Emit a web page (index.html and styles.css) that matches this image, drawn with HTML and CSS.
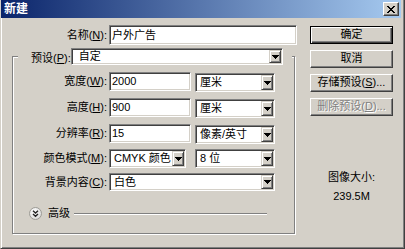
FILE: index.html
```html
<!DOCTYPE html>
<html lang="zh-CN">
<head>
<meta charset="utf-8">
<title>新建</title>
<link rel="stylesheet" href="styles.css">
</head>
<body>
<div class="window">
  <div class="titlebar">
    <span class="title">新建</span>
    <span class="close">
      <svg width="8" height="7" viewBox="0 0 8 7" shape-rendering="crispEdges"><path d="M0 0h2v1h-2zM6 0h2v1h-2zM1 1h2v1h-2zM5 1h2v1h-2zM2 2h4v1h-4zM3 3h2v1h-2zM2 4h4v1h-4zM1 5h2v1h-2zM5 5h2v1h-2zM0 6h2v1h-2zM6 6h2v1h-2z" fill="#000"/></svg>
    </span>
  </div>
  <div class="content">
    <div class="left">
      <div class="name-row">
        <span class="lbl name-lbl">名称(<u>N</u>):</span>
        <div class="field name">户外广告</div>
      </div>
      <fieldset class="group">
        <legend>
          <div class="legend-inner">
            <span class="legend-lbl">预设(<u>P</u>):</span>
            <div class="select preset"><span class="val">自定</span><span class="arrow"><svg width="7" height="4" viewBox="0 0 7 4" shape-rendering="crispEdges"><path d="M0 0h7v1h-1v1h-1v1h-1v1h-1v-1h-1v-1h-1v-1h-1z" fill="#000"/></svg></span></div>
          </div>
        </legend>
        <div class="row">
          <span class="lbl">宽度(<u>W</u>):</span>
          <div class="field num">2000</div>
          <div class="select unit"><span class="val">厘米</span><span class="arrow"><svg width="7" height="4" viewBox="0 0 7 4" shape-rendering="crispEdges"><path d="M0 0h7v1h-1v1h-1v1h-1v1h-1v-1h-1v-1h-1v-1h-1z" fill="#000"/></svg></span></div>
        </div>
        <div class="row">
          <span class="lbl">高度(<u>H</u>):</span>
          <div class="field num">900</div>
          <div class="select unit"><span class="val">厘米</span><span class="arrow"><svg width="7" height="4" viewBox="0 0 7 4" shape-rendering="crispEdges"><path d="M0 0h7v1h-1v1h-1v1h-1v1h-1v-1h-1v-1h-1v-1h-1z" fill="#000"/></svg></span></div>
        </div>
        <div class="row">
          <span class="lbl">分辨率(<u>R</u>):</span>
          <div class="field num">15</div>
          <div class="select unit"><span class="val">像素/英寸</span><span class="arrow"><svg width="7" height="4" viewBox="0 0 7 4" shape-rendering="crispEdges"><path d="M0 0h7v1h-1v1h-1v1h-1v1h-1v-1h-1v-1h-1v-1h-1z" fill="#000"/></svg></span></div>
        </div>
        <div class="row row-mode">
          <span class="lbl">颜色模式(<u>M</u>):</span>
          <div class="select mode"><span class="val">CMYK 颜色</span><span class="arrow"><svg width="7" height="4" viewBox="0 0 7 4" shape-rendering="crispEdges"><path d="M0 0h7v1h-1v1h-1v1h-1v1h-1v-1h-1v-1h-1v-1h-1z" fill="#000"/></svg></span></div>
          <div class="select bits"><span class="val">8 位</span><span class="arrow"><svg width="7" height="4" viewBox="0 0 7 4" shape-rendering="crispEdges"><path d="M0 0h7v1h-1v1h-1v1h-1v1h-1v-1h-1v-1h-1v-1h-1z" fill="#000"/></svg></span></div>
        </div>
        <div class="row row-bg">
          <span class="lbl">背景内容(<u>C</u>):</span>
          <div class="select bg"><span class="val">白色</span><span class="arrow"><svg width="7" height="4" viewBox="0 0 7 4" shape-rendering="crispEdges"><path d="M0 0h7v1h-1v1h-1v1h-1v1h-1v-1h-1v-1h-1v-1h-1z" fill="#000"/></svg></span></div>
        </div>
        <div class="adv">
          <svg class="adv-icon" width="13" height="13" viewBox="0 0 13 13">
            <defs><radialGradient id="g" cx="0.4" cy="0.35" r="0.7"><stop offset="0" stop-color="#ffffff"/><stop offset="1" stop-color="#d8d8d8"/></radialGradient></defs>
            <circle cx="6.5" cy="6.5" r="6" fill="url(#g)" stroke="#9c9a94"/>
            <path d="M4 3.8 L6.5 6 L9 3.8 M4 7 L6.5 9.2 L9 7" fill="none" stroke="#222" stroke-width="1.4"/>
          </svg>
          <span class="adv-lbl">高级</span>
          <span class="adv-line"></span>
        </div>
      </fieldset>
    </div>
    <div class="right">
      <div class="btn default">确定</div>
      <div class="btn">取消</div>
      <div class="btn">存储预设(<u>S</u>)...</div>
      <div class="btn disabled">删除预设(<u>D</u>)...</div>
      <div class="info">
        <div class="info-title">图像大小:</div>
        <div class="info-size">239.5M</div>
      </div>
    </div>
  </div>
</div>
</body>
</html>
```
FILE: styles.css
```css
* { box-sizing: border-box; }
html, body { margin: 0; padding: 0; }
body {
  font-family: "Liberation Sans", "Noto Sans CJK SC", sans-serif;
  font-size: 11px;
  color: #000;
  background: #d4d0c8;
}
.window {
  width: 405px;
  height: 249px;
  background: #d4d0c8;
  border-left: 1px solid #d4d0c8;
  border-right: 1px solid #404040;
  border-bottom: 1px solid #404040;
  box-shadow: inset 1px 0 0 #fff, inset -1px -1px 0 #808080;
  overflow: hidden;
}
.titlebar {
  margin-left: -1px;
  width: 401px;
  height: 18px;
  background: linear-gradient(to right, #0a246a, #a6caf0);
  display: flex;
  align-items: center;
  justify-content: space-between;
  padding: 0 2px 0 4px;
}
.title {
  color: #fff;
  font-weight: bold;
  font-size: 12px;
  line-height: 18px;
}
.close {
  width: 16px;
  height: 14px;
  background: #d4d0c8;
  border: 1px solid;
  border-color: #fff #404040 #404040 #fff;
  box-shadow: inset -1px -1px 0 #808080;
  display: flex;
  align-items: center;
  justify-content: center;
  padding-right: 1px;
}
.close svg { display: block; }

.content {
  display: flex;
  padding: 7px 0 0 11px;
}
.left { width: 285px; }
.lbl {
  width: 94px;
  text-align: right;
  line-height: 19px;
  margin-right: 2px;
  white-space: nowrap;
}
.name-row {
  display: flex;
  height: 20px;
}
.name-row .name-lbl { width: 95px; line-height: 20px; }
.field {
  height: 19px;
  background: #fff;
  border: 1px solid;
  border-color: #808080 #fff #fff #808080;
  box-shadow: inset 1px 1px 0 #404040, inset -1px -1px 0 #d4d0c8;
  padding: 1px 0 0 2px;
  line-height: 15px;
  white-space: nowrap;
}
.field.name { width: 188px; height: 20px; line-height: 16px; }
.field.num { width: 82px; }

.group {
  margin: 3px 0 0 0;
  padding: 0 0 13px 0;
  width: 283px;
  min-width: 0;
  border: 1px solid #808080;
  box-shadow: inset 1px 1px 0 #fff, 1px 1px 0 #fff;
}
.group legend {
  margin-left: 5px;
  padding: 0 9px 0 13px;
  background: #d4d0c8;
}
.legend-inner {
  display: flex;
  align-items: center;
  width: 252px;
  height: 17px;
}
.legend-lbl { flex: 1; white-space: nowrap; }

.select {
  display: flex;
  height: 19px;
  background: #fff;
  border: 1px solid;
  border-color: #808080 #fff #fff #808080;
  box-shadow: inset 1px 1px 0 #404040, inset -1px -1px 0 #d4d0c8;
  padding: 1px;
}
.select .val {
  flex: 1;
  padding-left: 3px;
  line-height: 15px;
  white-space: nowrap;
  overflow: hidden;
}
.select .arrow {
  width: 12px;
  background: #d4d0c8;
  border: 1px solid;
  border-color: #d4d0c8 #404040 #404040 #d4d0c8;
  box-shadow: inset 1px 1px 0 #fff, inset -1px -1px 0 #808080;
  display: flex;
  align-items: center;
  justify-content: center;
}
.select .arrow svg { display: block; }
.select.preset { width: 213px; height: 17px; }
.select.preset .val { padding-left: 6px; line-height: 13px; }
.select.unit { width: 80px; margin-left: 4px; margin-top: 1px; }
.select.mode { width: 77px; }
.select.bits { width: 80px; margin-left: 9px; }
.select.bg { width: 166px; height: 18px; }
.select.bg .val { line-height: 14px; }

.row {
  display: flex;
  align-items: flex-start;
  height: 19px;
  margin-top: 7px;
}
.row.row-mode { margin-top: 6px; }
.row.row-bg { margin-top: 5px; }

.adv {
  display: flex;
  align-items: center;
  height: 13px;
  margin-top: 15px;
  padding-left: 16px;
}
.adv-icon { display: block; }
.adv-lbl { margin-left: 6px; line-height: 13px; }
.adv-line {
  flex: 1;
  height: 2px;
  margin: 0 27px 0 4px;
  border-top: 1px solid #808080;
  border-bottom: 1px solid #fff;
}

.right {
  width: 83px;
  margin-left: 13px;
  padding-top: 1px;
}
.btn {
  height: 18px;
  border: 1px solid;
  border-color: #fff #404040 #404040 #fff;
  box-shadow: inset -1px -1px 0 #808080;
  text-align: center;
  line-height: 15px;
  white-space: nowrap;
}
.btn + .btn { margin-top: 6px; }
.btn.default {
  border: 1px solid #000;
  box-shadow: inset 1px 1px 0 #fff, inset -1px -1px 0 #404040, inset -2px -2px 0 #808080;
}
.btn.disabled {
  color: #808080;
  text-shadow: 1px 1px 0 #fff;
}
.info {
  margin-top: 54px;
  text-align: center;
  color: #000;
}
.info-title { line-height: 14px; }
.info-size { line-height: 14px; margin-top: 5px; }
```
